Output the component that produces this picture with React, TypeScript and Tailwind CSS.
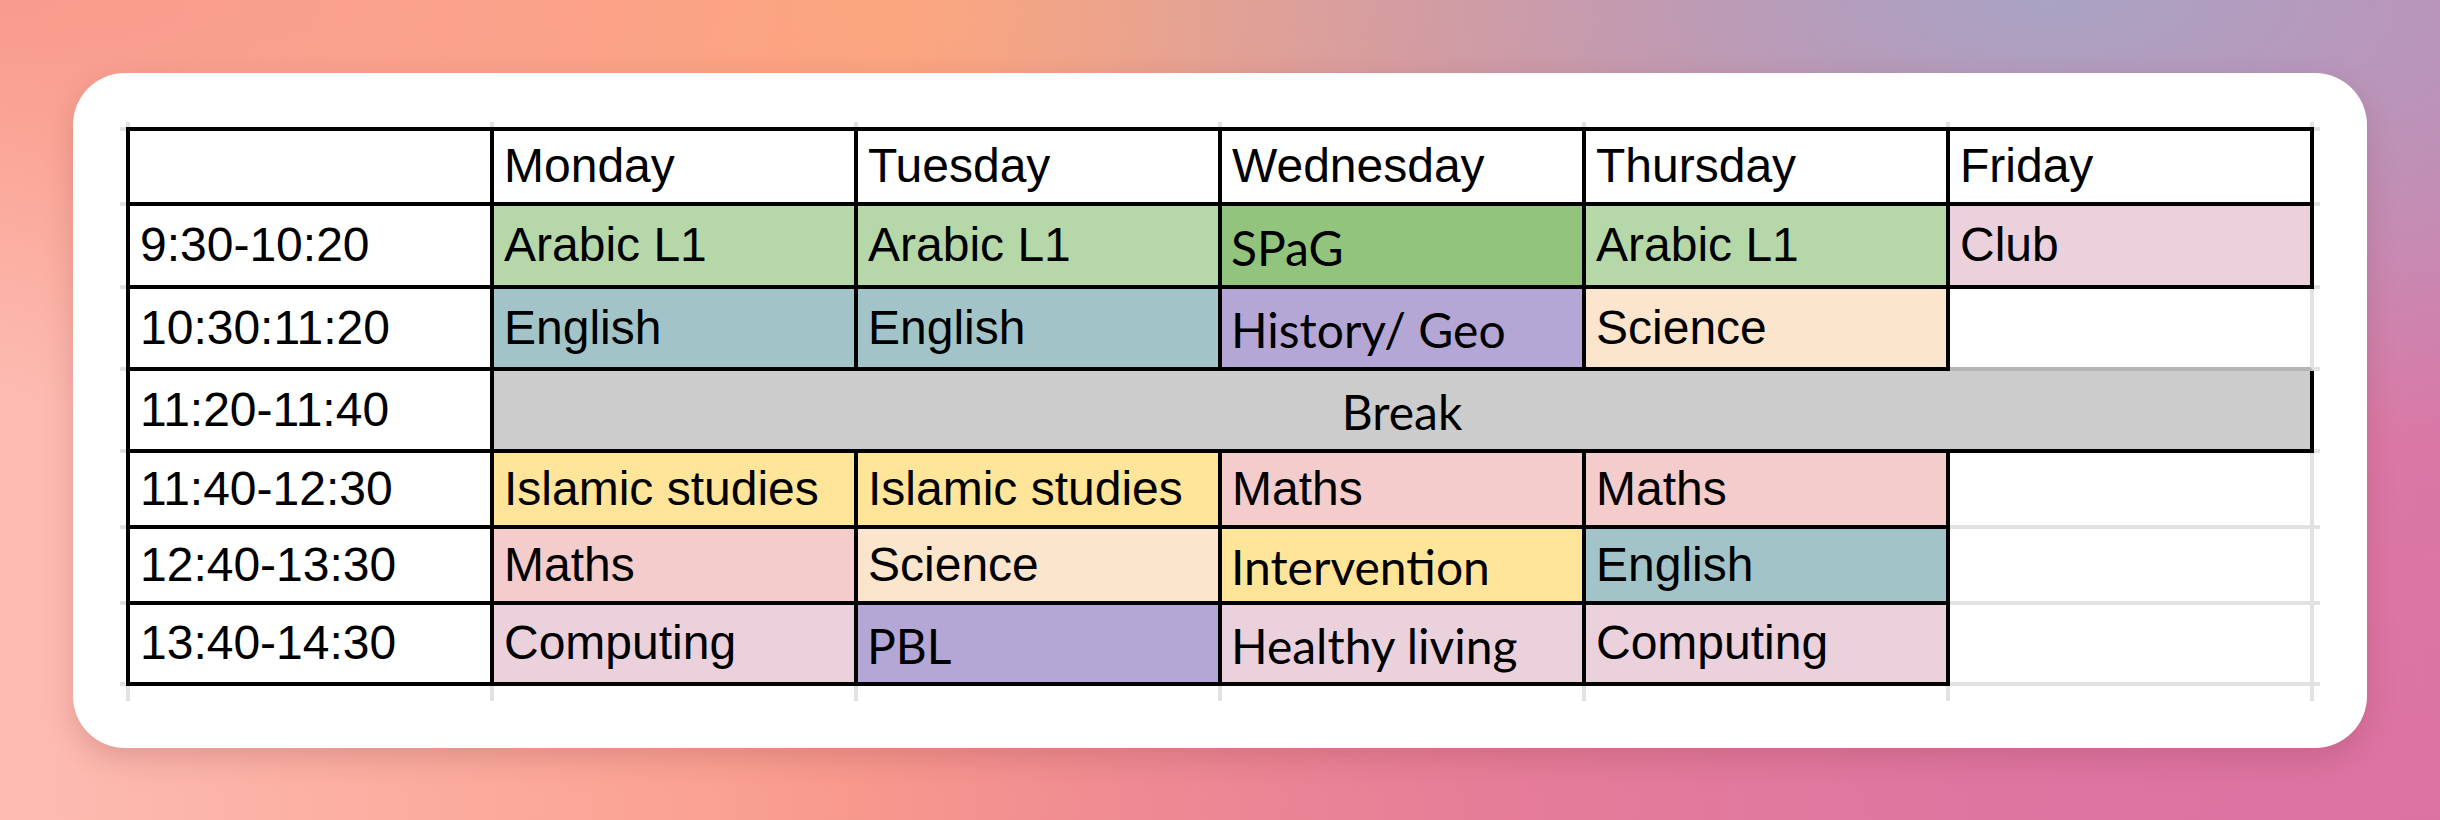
type Cell = { text: string; bg: string; alt?: boolean; line: boolean };

const white = "bg-white";

const head: Cell[] = ["", "Monday", "Tuesday", "Wednesday", "Thursday", "Friday"].map((t) => ({
  text: t,
  bg: white,
  line: true,
}));

const green: Cell = { text: "Arabic L1", bg: "bg-[#b6d7a8]", line: true };
const english: Cell = { text: "English", bg: "bg-[#a2c4c9]", line: true };
const maths: Cell = { text: "Maths", bg: "bg-[#f4cccc]", line: true };
const science: Cell = { text: "Science", bg: "bg-[#fce5cd]", line: true };
const islamic: Cell = { text: "Islamic studies", bg: "bg-[#ffe599]", line: true };
const computing: Cell = { text: "Computing", bg: "bg-[#ead1dc]", line: true };
const empty: Cell = { text: "", bg: white, line: false };
const time = (t: string): Cell => ({ text: t, bg: white, line: true });

const rows: (Cell[] | "break")[] = [
  head,
  [
    time("9:30-10:20"),
    green,
    green,
    { text: "SPaG", bg: "bg-[#93c47d]", alt: true, line: true },
    green,
    { text: "Club", bg: "bg-[#ead1dc]", line: true },
  ],
  [
    time("10:30:11:20"),
    english,
    english,
    { text: "History/ Geo", bg: "bg-[#b4a7d6]", alt: true, line: true },
    science,
    empty,
  ],
  "break",
  [time("11:40-12:30"), islamic, islamic, maths, maths, empty],
  [
    time("12:40-13:30"),
    maths,
    science,
    { text: "Intervention", bg: "bg-[#ffe599]", alt: true, line: true },
    english,
    empty,
  ],
  [
    time("13:40-14:30"),
    computing,
    { text: "PBL", bg: "bg-[#b4a7d6]", alt: true, line: true },
    { text: "Healthy living", bg: "bg-[#ead1dc]", alt: true, line: true },
    computing,
    empty,
  ],
];

type Edge = "black" | "gray" | "dark";

const rightCls = (e: Edge) => (e === "black" ? "border-r-4 border-r-black" : "border-r-4 border-r-[#e2e2e2]");
const leftCls = (e: Edge) => (e === "black" ? "border-l-4 border-l-black" : "border-l-4 border-l-[#e2e2e2]");
const topCls = (e: Edge) => (e === "black" ? "border-t-4 border-t-black" : "border-t-4 border-t-[#e2e2e2]");
const bottomCls = (e: Edge) =>
  e === "black"
    ? "border-b-4 border-b-black"
    : e === "dark"
      ? "border-b-4 border-b-[#b5b5b5]"
      : "border-b-4 border-b-[#e2e2e2]";

// the break row counts as unlined for the cell above it, it only draws right + bottom
const lined = (r: number, c: number) => {
  const row = rows[r];
  if (row === "break") return c === 0;
  return row[c].line;
};

const MainCell = ({ r, c, cell }: { r: number; c: number; cell: Cell }) => {
  const me = cell.line;
  const right: Edge = (c < 5 ? me || lined(r, c + 1) : me) ? "black" : "gray";
  let bottom: Edge = (r < 6 ? me || lined(r + 1, c) : me) ? "black" : "gray";
  if (r === 2 && c === 5) bottom = "dark";
  const cls = [
    "flex items-center overflow-hidden whitespace-nowrap text-black",
    cell.bg,
    rightCls(right),
    bottomCls(bottom),
    r === 0 ? topCls("black") : "",
    c === 0 ? leftCls("black") : "",
    cell.alt
      ? "pl-[9px] pt-[5px] font-['Lato',sans-serif] text-[48px]"
      : "pl-[10px] font-['Liberation_Sans',Arial,sans-serif] text-[48px]",
  ].join(" ");
  return <div className={cls}>{cell.text}</div>;
};

const EdgeRow = ({ pos }: { pos: "top" | "bottom" }) => (
  <>
    <div />
    <div className={`${leftCls("gray")} ${rightCls("gray")}`} />
    {[1, 2, 3, 4, 5].map((i) => (
      <div key={`${pos}${i}`} className={rightCls("gray")} />
    ))}
    <div />
  </>
);

export default function App() {
  return (
    <div className="flex h-[820px] w-full items-center justify-center bg-[radial-gradient(ellipse_at_0%_0%,#f99b8c_0%,rgba(249,155,140,0)_35%),radial-gradient(ellipse_at_84%_0%,#a9a3c4_0%,rgba(169,163,196,0)_40%),radial-gradient(ellipse_at_36%_0%,#fdaa7a_0%,rgba(253,170,122,0)_45%),radial-gradient(ellipse_at_100%_100%,#dc72a2_0%,rgba(220,114,162,0)_50%),linear-gradient(to_right,#fdbcb2_0%,#fa9c8b_35%,#ee8591_62%,#d97aa8_100%)]">
      <div className="h-[675px] w-[2294px] rounded-[52px] bg-white pl-[47px] pt-[49px] shadow-[0_10px_28px_rgba(130,50,60,0.22)]">
        <div className="grid grid-cols-[6px_368px_364px_364px_364px_364px_364px_6px] grid-rows-[5px_79px_83px_82px_82px_76px_76px_81px_15px]">
          <EdgeRow pos="top" />
          {rows.map((row, r) => (
            <div key={r} className="contents">
              <div className={`${bottomCls("gray")} ${r === 0 ? topCls("gray") : ""}`} />
              {row === "break" ? (
                <>
                  <MainCell r={r} c={0} cell={time("11:20-11:40")} />
                  <div className="col-span-5 flex items-center justify-center border-r-4 border-b-4 border-r-black border-b-black bg-[#cccccc] pt-[5px] font-['Lato',sans-serif] text-[48px] text-black">
                    Break
                  </div>
                </>
              ) : (
                row.map((cell, c) => <MainCell key={c} r={r} c={c} cell={cell} />)
              )}
              <div className={`${bottomCls("gray")} ${r === 0 ? topCls("gray") : ""}`} />
            </div>
          ))}
          <EdgeRow pos="bottom" />
        </div>
      </div>
    </div>
  );
}
